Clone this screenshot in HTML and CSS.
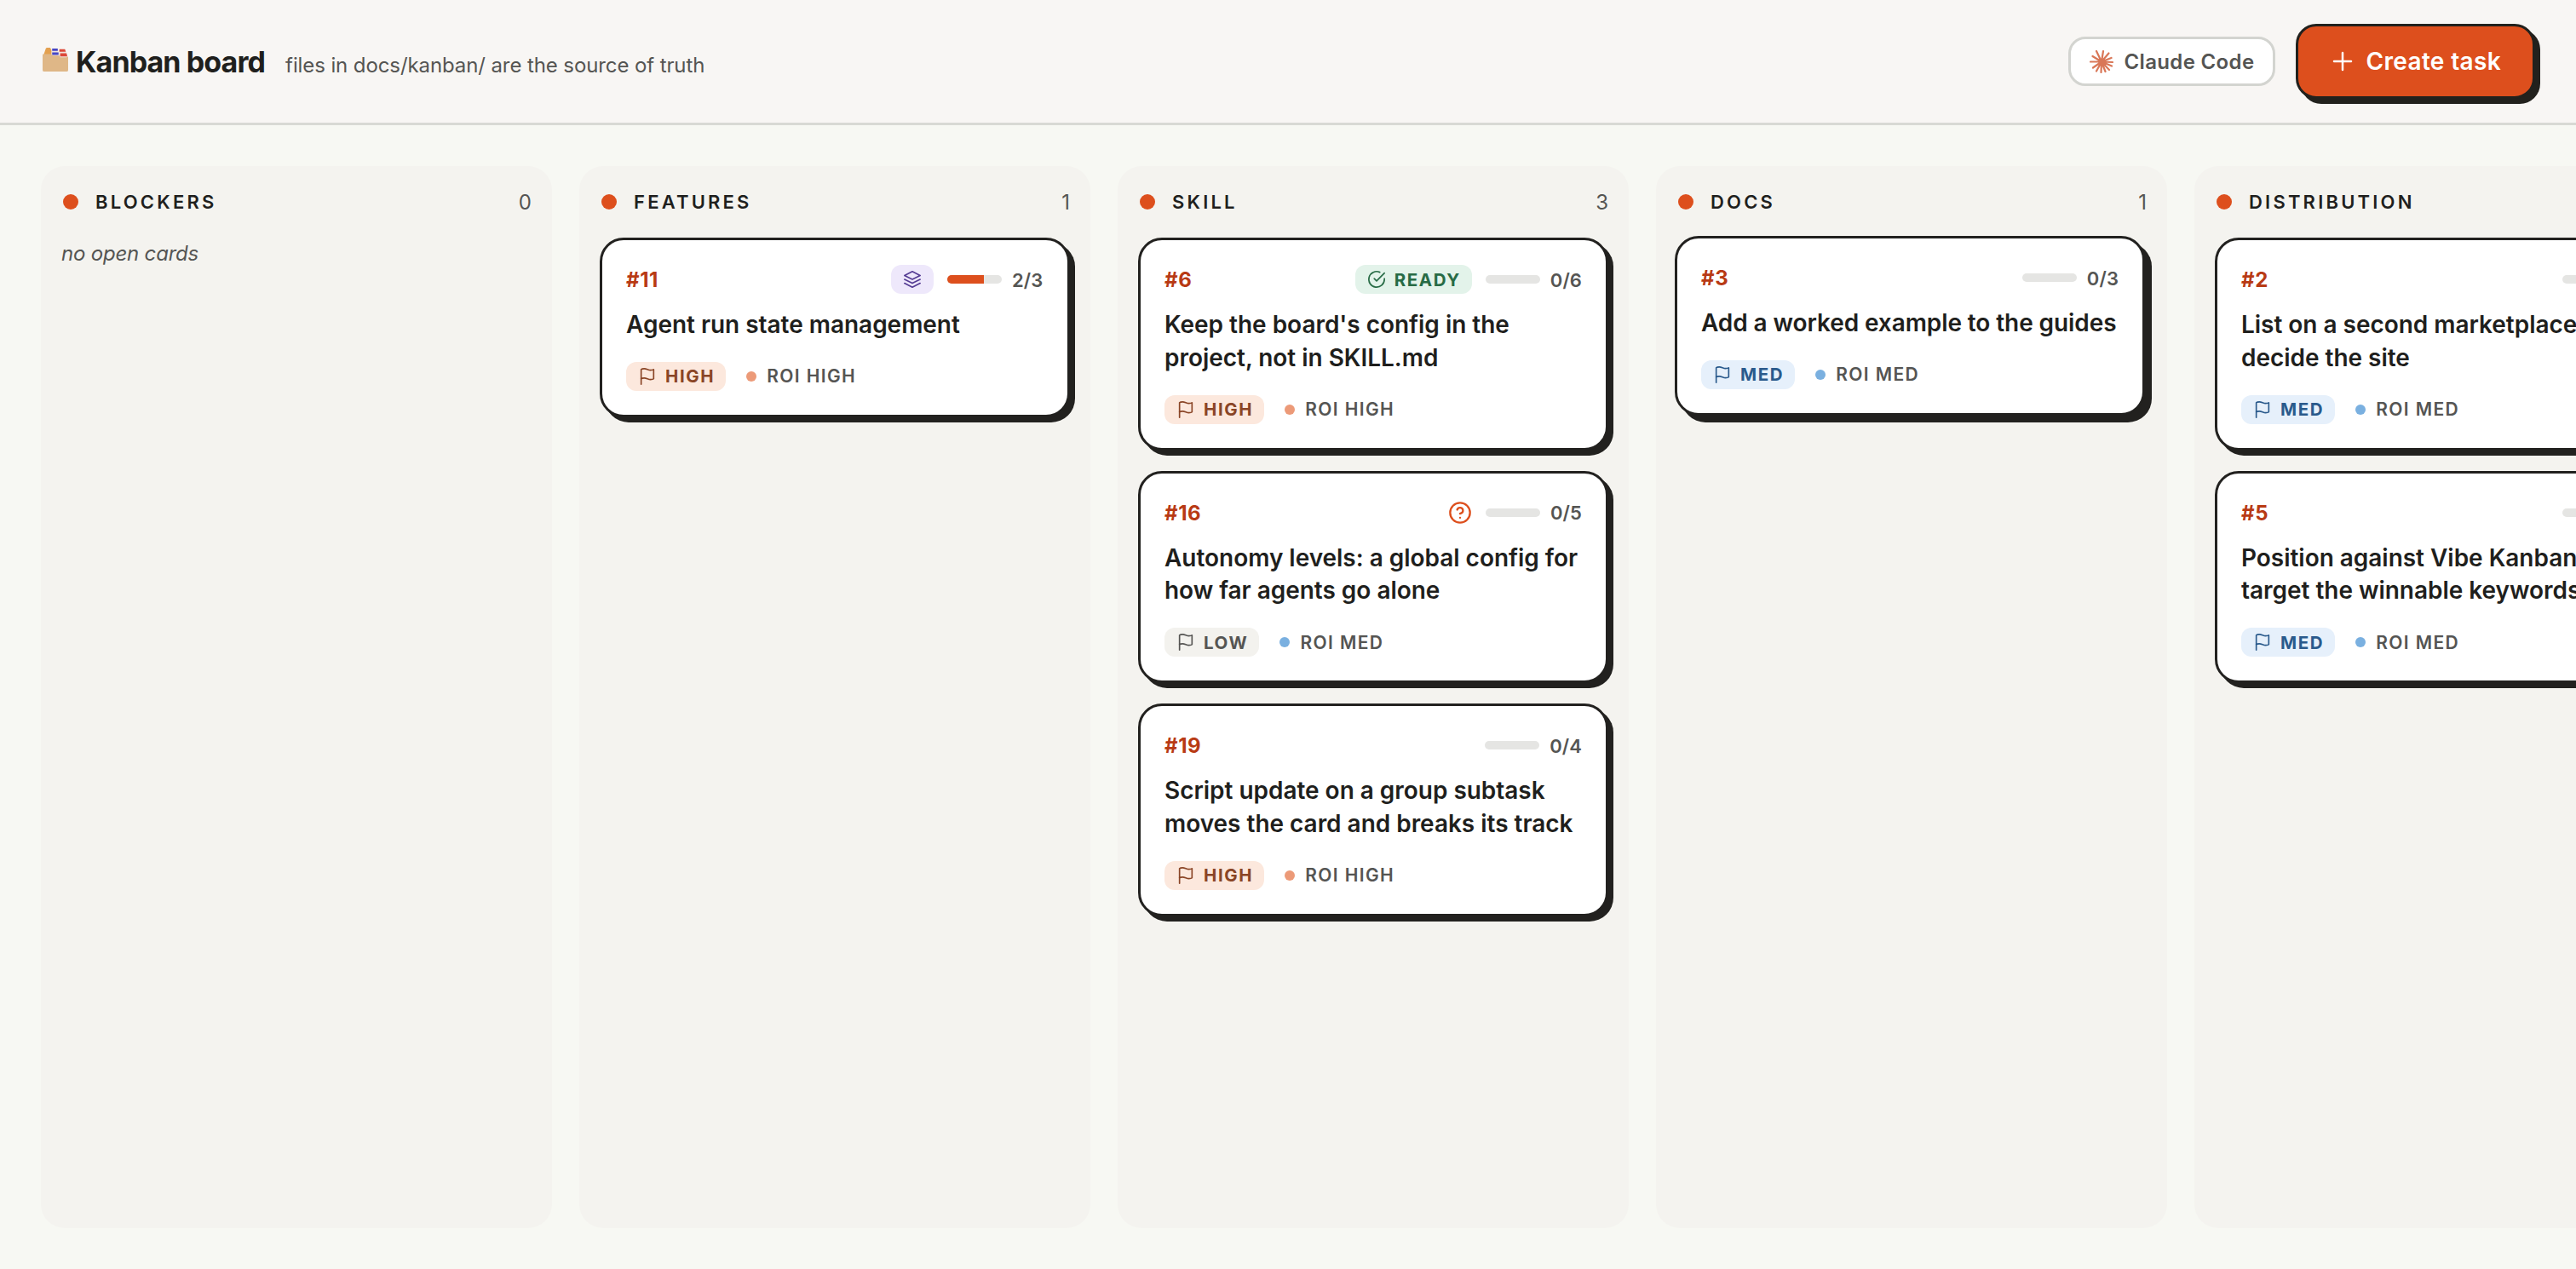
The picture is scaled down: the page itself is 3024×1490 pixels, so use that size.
FILE: index.html
```html
<!DOCTYPE html>
<html lang="en">
<head>
  <meta charset="utf-8">
  <title>Kanban board</title>
  <link rel="stylesheet" href="styles.css">
</head>
<body>
  <!-- Shared icons -->
  <svg class="sprite" aria-hidden="true">
    <symbol id="flag" viewBox="0 0 24 24"><path d="M4 15s1-1 4-1 5 2 8 2 4-1 4-1V3s-1 1-4 1-5-2-8-2-4 1-4 1z"/><path d="M4 22v-7"/></symbol>
    <symbol id="layers" viewBox="0 0 24 24"><path d="M12 2 2 7l10 5 10-5z"/><path d="m2 12 10 5 10-5"/><path d="m2 17 10 5 10-5"/></symbol>
    <symbol id="check" viewBox="0 0 24 24"><path d="M22 11.080V12a10 10 0 1 1-5.930-9.140"/><path d="M22 4 12 14l-3-3"/></symbol>
    <symbol id="help" viewBox="0 0 24 24"><circle cx="12" cy="12" r="10"/><path d="M9.090 9a3 3 0 0 1 5.830 1c0 2-3 3-3 3"/><path d="M12 17h.01"/></symbol>
    <symbol id="plus" viewBox="0 0 24 24"><path d="M4 12h16M12 4v16"/></symbol>
  </svg>

  <header class="topbar">
    <div class="brand">
      <svg class="brand-icon" viewBox="0 0 32 32">
        <path d="M1 11 4 2q.5-1 1.500-1H9q1 0 1 1l2 3v8H1z" fill="#e3a04f"/>
        <path d="M11 3h8v9h-8zM20 4h9l2 9H20z" fill="#efe3dc"/>
        <path d="M12 2h7v3h-7zM12 7h8v3h-8z" fill="#4747c4"/>
        <path d="M21 3h7l1 3h-8zM22 8h8l1 4h-9z" fill="#dc4838"/>
        <path d="M0 10q0-1 1-1h9l3 2h8l1 2h8l2-1v17q0 2-2 2H2q-2 0-2-2z" fill="#dfb787"/>
      </svg>
      <h1>Kanban board</h1>
      <span class="tagline">files in docs/kanban/ are the source of truth</span>
    </div>
    <div class="actions">
      <button class="agent-button">
        <svg class="claude-icon" viewBox="0 0 28 28"><path d="M14 14.500 8 2M14 14.500 16 2M14 14.500 22.500 4.500M14 14.500 25.500 10M14 14.500 27 15M14 14.500 26 19.500M14 14.500 23 24M14 14.500 18.500 26M14 14.500 13.500 27M14 14.500 8 25.500M14 14.500 4 21.500M14 14.500 1 14.500M14 14.500 3.500 8"/></svg>
        Claude Code
      </button>
      <button class="create-button">
        <svg class="icon"><use href="#plus"/></svg>
        Create task
      </button>
    </div>
  </header>

  <main class="board">
    <section class="column">
      <div class="column-head"><span class="dot"></span><h2>Blockers</h2><span class="count">0</span></div>
      <p class="empty">no open cards</p>
    </section>

    <section class="column">
      <div class="column-head"><span class="dot"></span><h2>Features</h2><span class="count">1</span></div>
      <article class="card">
        <div class="card-top">
          <span class="card-id">#11</span>
          <span class="chip group"><svg class="icon"><use href="#layers"/></svg></span>
          <span class="progress"><span class="fill" style="width: 66.7%"></span></span>
          <span class="steps">2/3</span>
        </div>
        <h3>Agent run state management</h3>
        <div class="meta"><span class="chip high"><svg class="icon"><use href="#flag"/></svg>High</span><span class="roi roi-high">ROI High</span></div>
      </article>
    </section>

    <section class="column">
      <div class="column-head"><span class="dot"></span><h2>Skill</h2><span class="count">3</span></div>
      <article class="card">
        <div class="card-top">
          <span class="card-id">#6</span>
          <span class="chip ready"><svg class="icon"><use href="#check"/></svg>Ready</span>
          <span class="progress"></span>
          <span class="steps">0/6</span>
        </div>
        <h3>Keep the board's config in the project, not in SKILL.md</h3>
        <div class="meta"><span class="chip high"><svg class="icon"><use href="#flag"/></svg>High</span><span class="roi roi-high">ROI High</span></div>
      </article>
      <article class="card">
        <div class="card-top">
          <span class="card-id">#16</span>
          <svg class="icon question"><use href="#help"/></svg>
          <span class="progress"></span>
          <span class="steps">0/5</span>
        </div>
        <h3>Autonomy levels: a global config for how far agents go alone</h3>
        <div class="meta"><span class="chip low"><svg class="icon"><use href="#flag"/></svg>Low</span><span class="roi roi-med">ROI Med</span></div>
      </article>
      <article class="card">
        <div class="card-top">
          <span class="card-id">#19</span>
          <span class="progress"></span>
          <span class="steps">0/4</span>
        </div>
        <h3>Script update on a group subtask moves the card and breaks its track</h3>
        <div class="meta"><span class="chip high"><svg class="icon"><use href="#flag"/></svg>High</span><span class="roi roi-high">ROI High</span></div>
      </article>
    </section>

    <section class="column">
      <div class="column-head"><span class="dot"></span><h2>Docs</h2><span class="count">1</span></div>
      <article class="card raised">
        <div class="card-top">
          <span class="card-id">#3</span>
          <span class="progress"></span>
          <span class="steps">0/3</span>
        </div>
        <h3>Add a worked example to the guides</h3>
        <div class="meta"><span class="chip med"><svg class="icon"><use href="#flag"/></svg>Med</span><span class="roi roi-med">ROI Med</span></div>
      </article>
    </section>

    <section class="column">
      <div class="column-head"><span class="dot"></span><h2>Distribution</h2></div>
      <article class="card">
        <div class="card-top">
          <span class="card-id">#2</span>
          <span class="progress"></span>
          <span class="steps"></span>
        </div>
        <h3>List on a second marketplace<br>decide the site</h3>
        <div class="meta"><span class="chip med"><svg class="icon"><use href="#flag"/></svg>Med</span><span class="roi roi-med">ROI Med</span></div>
      </article>
      <article class="card">
        <div class="card-top">
          <span class="card-id">#5</span>
          <span class="progress"></span>
          <span class="steps"></span>
        </div>
        <h3>Position against Vibe Kanban<br>target the winnable keywords</h3>
        <div class="meta"><span class="chip med"><svg class="icon"><use href="#flag"/></svg>Med</span><span class="roi roi-med">ROI Med</span></div>
      </article>
    </section>
  </main>
</body>
</html>
```
FILE: styles.css
```css
* {
  box-sizing: border-box;
}
body {
  margin: 0;
  height: 100vh;
  display: flex;
  flex-direction: column;
  overflow: hidden;
  font-family: Inter, "Liberation Sans", sans-serif;
  background: #f7f8f3;
  color: #1f1f1d;
}
h1, h2, h3, p {
  margin: 0;
}
button {
  font-family: inherit;
}
.sprite {
  display: none;
}
.icon {
  flex: none;
  width: 24px;
  height: 24px;
  fill: none;
  stroke: currentColor;
  stroke-width: 2;
  stroke-linecap: round;
  stroke-linejoin: round;
}

/* Header */
.topbar {
  flex: none;
  height: 147px;
  padding: 0 48px;
  display: flex;
  align-items: center;
  justify-content: space-between;
  background: #f8f6f4;
  border-bottom: 3px solid #d8d9d4;
}
.brand {
  padding-top: 1px;
  display: flex;
  align-items: baseline;
}
.brand-icon {
  width: 30px;
  height: 30px;
  margin: 0 9px -3px 2px;
}
h1 {
  font-size: 34px;
  font-weight: 700;
  letter-spacing: -0.9px;
}
.tagline {
  margin-left: 24px;
  font-size: 24px;
  letter-spacing: -0.1px;
  color: #555553;
}
.actions {
  display: flex;
  align-items: center;
  gap: 24px;
}
.agent-button {
  height: 58px;
  padding: 0 22px;
  display: flex;
  align-items: center;
  gap: 12px;
  border: 3px solid #d3d4d0;
  border-radius: 20px;
  background: #fff;
  color: #555553;
  font-size: 24px;
  font-weight: 600;
  letter-spacing: 0.35px;
}
.claude-icon {
  width: 28px;
  height: 28px;
  fill: none;
  stroke: #d97757;
  stroke-width: 2.2;
  stroke-linecap: round;
}
.create-button {
  height: 88px;
  padding: 0 37px;
  display: flex;
  align-items: center;
  gap: 12px;
  border: 3px solid #22211d;
  border-radius: 24px;
  background: #dd4f1d;
  box-shadow: 6px 6px 0 #22211d;
  color: #fff;
  font-size: 28px;
  font-weight: 600;
  letter-spacing: 0.35px;
}
.create-button .icon {
  width: 30px;
  height: 30px;
}

/* Board */
.board {
  flex: 1;
  min-height: 0;
  padding: 48px;
  display: flex;
  gap: 32px;
}
.column {
  flex: 0 0 600px;
  padding: 24px;
  border-radius: 28px;
  background: #f4f3ef;
  display: flex;
  flex-direction: column;
  gap: 24px;
}
.column-head {
  height: 36px;
  padding: 0 0 0 2px;
  display: flex;
  align-items: center;
}
.dot {
  width: 18px;
  height: 18px;
  margin-right: 20px;
  border-radius: 50%;
  background: #dd4f1d;
}
h2 {
  flex: 1;
  font-size: 22px;
  font-weight: 600;
  letter-spacing: 3.2px;
  text-transform: uppercase;
}
.count {
  padding-top: 1px;
  font-size: 24px;
  color: #555553;
}
.empty {
  padding-top: 4px;
  font-size: 24px;
  font-style: italic;
  letter-spacing: -0.2px;
  color: #555553;
}

/* Cards */
.card {
  flex: none;
  padding: 28px;
  border: 3px solid #22211f;
  border-radius: 28px;
  background: #fff;
  box-shadow: 6px 6px 0 #22211f;
}
.card.raised {
  transform: translate(-2px, -2px);
  box-shadow: 8px 8px 0 #22211f;
}
.card-top {
  height: 36px;
  display: flex;
  align-items: center;
}
.card-id {
  margin-right: auto;
  padding-top: 1px;
  font-size: 24px;
  font-weight: 700;
  letter-spacing: 0.6px;
  color: #b83a14;
}
.progress {
  width: 64px;
  height: 10px;
  margin: 0 12px 0 16px;
  border-radius: 5px;
  overflow: hidden;
  background: #e5e5e3;
}
.fill {
  display: block;
  height: 100%;
  background: #dd4f1d;
}
.steps {
  min-width: 37px;
  padding-top: 1px;
  font-size: 22px;
  font-weight: 600;
  letter-spacing: 0.1px;
  color: #555553;
}
h3 {
  margin: 16px 0 24px;
  font-size: 28px;
  line-height: 38.8px;
  font-weight: 600;
  letter-spacing: -0.03px;
}
.raised h3 {
  letter-spacing: -0.09px;
}
.meta {
  display: flex;
  align-items: center;
  gap: 24px;
}
.chip {
  height: 34px;
  padding: 0 13px 0 14px;
  display: flex;
  align-items: center;
  gap: 10px;
  border-radius: 12px;
  font-size: 20.5px;
  font-weight: 700;
  letter-spacing: 1.6px;
  text-transform: uppercase;
}
.chip .icon {
  width: 22px;
  height: 22px;
  stroke-width: 1.8;
}
.high {
  background: #fce8dd;
  color: #8a4526;
}
.med {
  background: #e6f0fb;
  color: #2a5a8c;
}
.low {
  background: #f3f2ee;
  color: #555553;
}
.ready {
  background: #e3f3ea;
  color: #276b45;
}
.group {
  padding: 0 14px;
  background: #eee8fb;
  color: #553c94;
}
.question {
  width: 28px;
  height: 28px;
  color: #dd4f1d;
}
.roi {
  display: flex;
  align-items: center;
  gap: 12px;
  font-size: 21px;
  font-weight: 600;
  letter-spacing: 1.4px;
  text-transform: uppercase;
  color: #555553;
}
.roi::before {
  content: "";
  width: 12px;
  height: 12px;
  border-radius: 50%;
}
.roi-high::before {
  background: #ec9a78;
}
.roi-med::before {
  background: #7ab0e0;
}
```
